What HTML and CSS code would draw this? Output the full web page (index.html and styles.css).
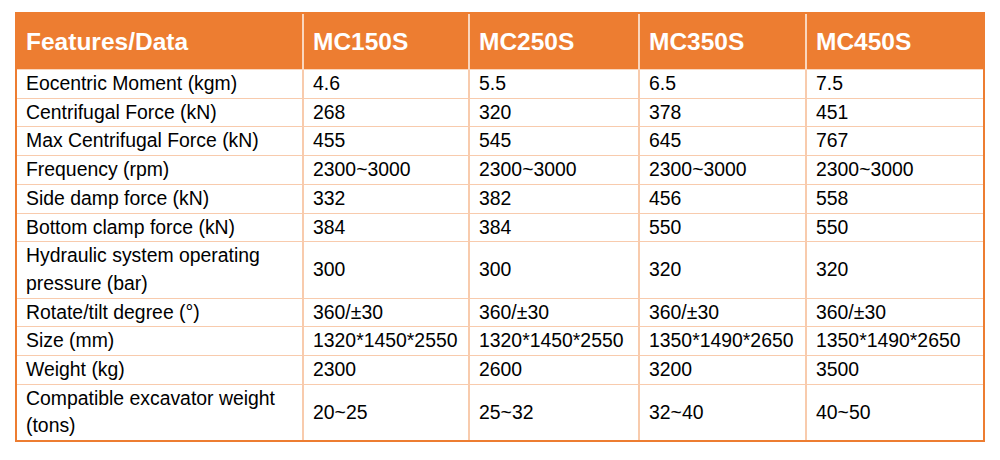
FILE: index.html
```html
<!DOCTYPE html>
<html>
<head>
<meta charset="utf-8">
<link rel="stylesheet" href="styles.css">
</head>
<body>
<table class="spec">
  <colgroup>
    <col class="c1"><col class="c2"><col class="c3"><col class="c4"><col class="c5">
  </colgroup>
  <thead>
    <tr><th>Features/Data</th><th>MC150S</th><th>MC250S</th><th>MC350S</th><th>MC450S</th></tr>
  </thead>
  <tbody>
    <tr><td>Eocentric Moment (kgm)</td><td>4.6</td><td>5.5</td><td>6.5</td><td>7.5</td></tr>
    <tr><td>Centrifugal Force (kN)</td><td>268</td><td>320</td><td>378</td><td>451</td></tr>
    <tr><td>Max Centrifugal Force (kN)</td><td>455</td><td>545</td><td>645</td><td>767</td></tr>
    <tr><td>Frequency (rpm)</td><td>2300~3000</td><td>2300~3000</td><td>2300~3000</td><td>2300~3000</td></tr>
    <tr><td>Side damp force (kN)</td><td>332</td><td>382</td><td>456</td><td>558</td></tr>
    <tr><td>Bottom clamp force (kN)</td><td>384</td><td>384</td><td>550</td><td>550</td></tr>
    <tr><td>Hydraulic system operating pressure (bar)</td><td>300</td><td>300</td><td>320</td><td>320</td></tr>
    <tr><td>Rotate/tilt degree (°)</td><td>360/±30</td><td>360/±30</td><td>360/±30</td><td>360/±30</td></tr>
    <tr><td>Size (mm)</td><td>1320*1450*2550</td><td>1320*1450*2550</td><td>1350*1490*2650</td><td>1350*1490*2650</td></tr>
    <tr><td>Weight (kg)</td><td>2300</td><td>2600</td><td>3200</td><td>3500</td></tr>
    <tr><td>Compatible excavator weight (tons)</td><td>20~25</td><td>25~32</td><td>32~40</td><td>40~50</td></tr>
  </tbody>
</table>
</body>
</html>
```
FILE: styles.css
```css
html, body {
  margin: 0;
  padding: 0;
  background: #ffffff;
}
body {
  font-family: "Liberation Sans", Arial, sans-serif;
  color: #000000;
}
.spec {
  margin: 12px 0 0 15px;
  width: 970px;
  table-layout: fixed;
  border-collapse: separate;
  border-spacing: 0;
  border: 2px solid #ED7D31;
}
.c1 { width: 287px; }
.c2 { width: 166px; }
.c3 { width: 170px; }
.c4 { width: 167px; }
.c5 { width: 176px; }
.spec th,
.spec td {
  box-sizing: border-box;
  padding: 0 4px 0 9px;
  text-align: left;
  vertical-align: middle;
  border-right: 2px solid #F8CBAD;
  border-bottom: 1px solid #F8CBAD;
}
.spec th:last-child,
.spec td:last-child {
  border-right: none;
}
.spec tbody tr:last-child td {
  border-bottom: none;
}
.spec th {
  background: #ED7D31;
  color: #ffffff;
  font-size: 24.5px;
  font-weight: bold;
  height: 56px;
  border-right-color: #FAD6BD;
  border-bottom-color: #FAD6BD;
}
.spec td {
  font-size: 19.4px;
  line-height: 27.7px;
  white-space: normal;
}
```
